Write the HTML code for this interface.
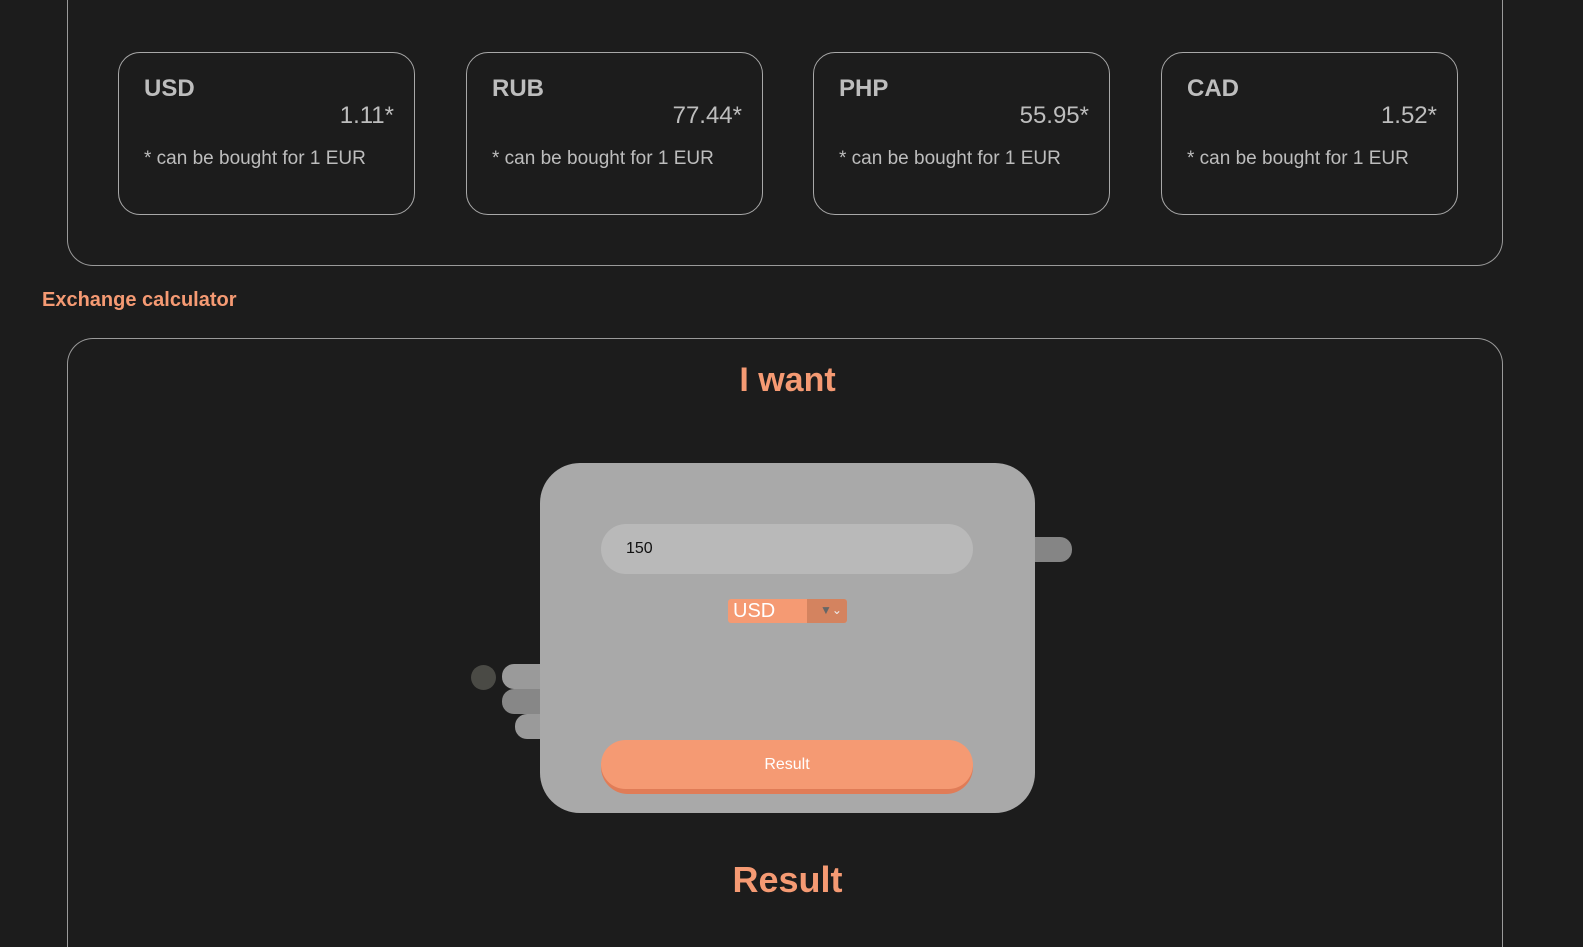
<!DOCTYPE html>
<html style="overflow:hidden;width:1583px;height:947px"><head><meta charset="utf-8"><style>
*{box-sizing:border-box;margin:0;padding:0}
body{width:1583px;height:947px;overflow:hidden;background:#1c1c1c;font-family:"Liberation Sans",sans-serif;position:relative}
.abs{position:absolute}
.panel{position:absolute;border:1px solid #9a9a9a;border-radius:26px}
.card{position:absolute;top:52px;width:297px;height:163px;border:1px solid #a8a8a8;border-radius:22px;color:#bdbdbd}
.card .h{position:absolute;left:25px;top:22px;font-size:24px;font-weight:bold}
.card .v{position:absolute;right:20px;top:49px;font-size:24px}
.card .n{position:absolute;left:25px;top:95px;font-size:19px}
.orange{color:#f59a73;font-weight:bold}
</style></head><body>
<div class="panel" style="left:67px;top:0;width:1436px;height:266px;border-top:none;border-top-left-radius:0;border-top-right-radius:0"></div>
<div class="card" style="left:118px"><div class="h">USD</div><div class="v">1.11*</div><div class="n">* can be bought for 1 EUR</div></div>
<div class="card" style="left:466px"><div class="h">RUB</div><div class="v">77.44*</div><div class="n">* can be bought for 1 EUR</div></div>
<div class="card" style="left:813px"><div class="h">PHP</div><div class="v">55.95*</div><div class="n">* can be bought for 1 EUR</div></div>
<div class="card" style="left:1161px"><div class="h">CAD</div><div class="v">1.52*</div><div class="n">* can be bought for 1 EUR</div></div>
<div class="abs orange" style="left:42px;top:289px;font-size:20px">Exchange calculator</div>
<div class="panel" style="left:67px;top:338px;width:1436px;height:609px;border-bottom:none;border-bottom-left-radius:0;border-bottom-right-radius:0"></div>
<div class="abs orange" style="left:0;width:1575px;text-align:center;top:361px;font-size:34px">I want</div>
<div class="abs" style="left:471px;top:665px;width:25px;height:25px;border-radius:50%;background:#4a4a45"></div>
<div class="abs" style="left:502px;top:664px;width:63px;height:25px;border-radius:12px;background:#9a9a9a"></div>
<div class="abs" style="left:502px;top:689px;width:63px;height:25px;border-radius:12px;background:#878787"></div>
<div class="abs" style="left:515px;top:714px;width:62px;height:25px;border-radius:12px;background:#9a9a9a"></div>
<div class="abs" style="left:1010px;top:537px;width:62px;height:25px;border-radius:12px;background:#858585"></div>
<div class="abs" style="left:540px;top:463px;width:495px;height:350px;border-radius:40px;background:#a9a9a9"></div>
<div class="abs" style="left:601px;top:524px;width:372px;height:50px;border-radius:25px;background:#b9b9b9;font-size:16px;color:#111;padding:16px 0 0 25px">150</div>
<div class="abs" style="left:728px;top:599px;width:119px;height:24px;border-radius:3px;background:#f59a73;color:#fff;font-size:20px;padding:0 0 0 5px;line-height:24px">USD</div>
<div class="abs" style="left:807px;top:599px;width:40px;height:24px;border-radius:0 3px 3px 0;background:#d4835f;color:#eee;font-size:12px;line-height:22px;padding-left:13px"><span style="color:#666">▼</span>⌄</div>
<div class="abs" style="left:601px;top:740px;width:372px;height:54px;border-radius:27px;background:#e07c57"></div>
<div class="abs" style="left:601px;top:740px;width:372px;height:49px;border-radius:25px;background:#f59a73;color:#fff;font-size:16px;text-align:center;line-height:49px">Result</div>
<div class="abs orange" style="left:0;width:1575px;text-align:center;top:859px;font-size:36px">Result</div>
</body></html>
